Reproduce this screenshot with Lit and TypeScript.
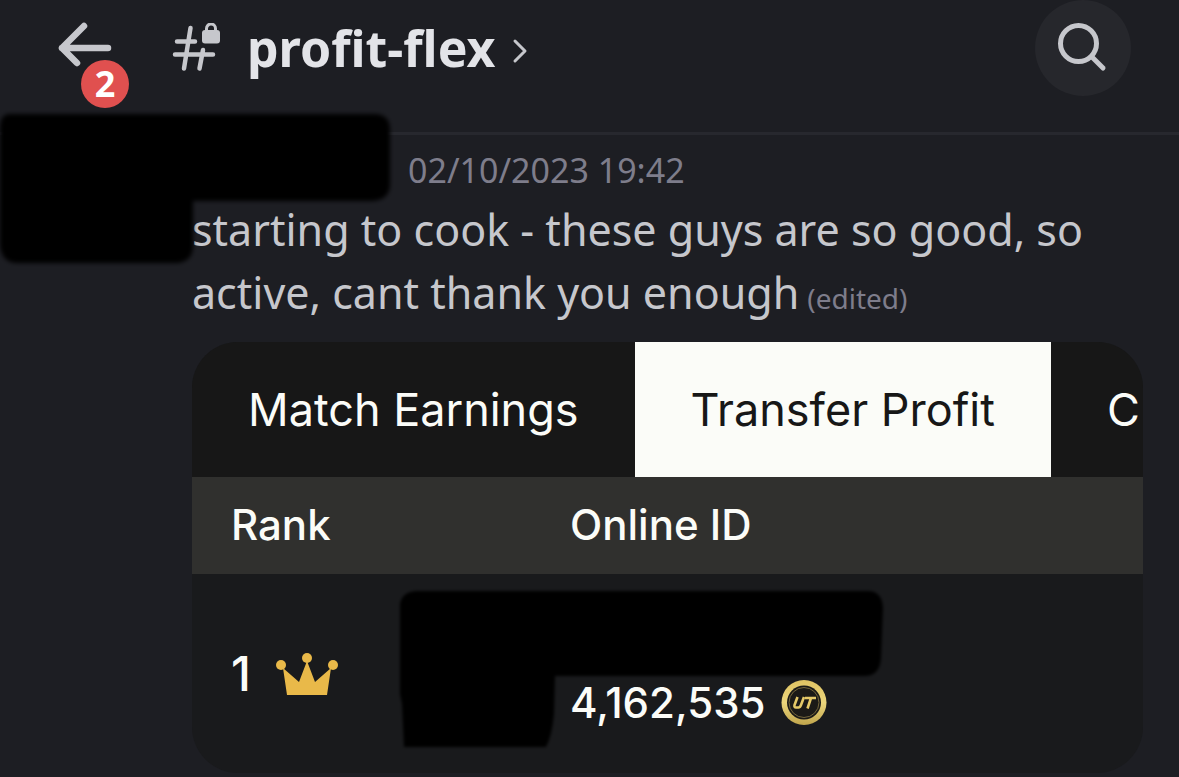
import { LitElement, html, css } from "lit";
import { customElement, state } from "lit/decorators.js";

@customElement("channel-header")
class ChannelHeader extends LitElement {
  static styles = css`
    :host { display: block; }
    .bar {
      display: flex;
      align-items: center;
      padding: 0 48px 36px 56px;
      border-bottom: 3px solid #27282e;
    }
    button {
      display: block;
      border: 0;
      margin: 0;
      padding: 0;
      background: none;
      color: inherit;
      font: inherit;
      cursor: pointer;
    }
    svg { display: block; }
    .back { position: relative; color: #c6c7cc; }
    .badge {
      position: absolute;
      left: 25px;
      top: 38px;
      width: 48px;
      height: 48px;
      border-radius: 50%;
      background: #e0504f;
      color: #fff;
      font: 700 36px/48px "Noto Sans", sans-serif;
      text-align: center;
    }
    .title {
      display: flex;
      align-items: center;
      margin: 0 auto 0 60px;
      color: #c6c7cc;
    }
    h1 {
      margin: 0 16px 0 26px;
      color: #e3e4e8;
      font: 700 50px/64px "Noto Sans", sans-serif;
    }
    .search {
      display: grid;
      place-items: center;
      width: 96px;
      height: 96px;
      border-radius: 50%;
      background: #26272c;
      color: #c6c7cc;
    }
  `;

  render() {
    return html`
      <header class="bar">
        <button class="back" aria-label="Back, 2 unread">
          <svg width="56" height="52" viewBox="0 0 56 52" fill="none" stroke="currentColor" stroke-width="6.500" stroke-linecap="round" stroke-linejoin="round">
            <path d="M28 4 6 26 21 41M6 26H52" />
          </svg>
          <span class="badge">2</span>
        </button>
        <div class="title">
          <svg width="49" height="50" viewBox="0 0 49 50" fill="none" stroke="currentColor" stroke-width="4.500" stroke-linecap="round">
            <path d="M18.500 5 12 45.500M31 27 27.500 45.500M5 18.500H23M3 31.500H41" />
            <rect x="30" y="7" width="18" height="13.500" rx="3" fill="currentColor" stroke="none" />
            <path d="M34.500 9V6.500a4.500 4.500 0 0 1 9 0V9" stroke-width="3" transform="translate(0 -1)" />
          </svg>
          <h1>profit-flex</h1>
          <svg width="16" height="32" viewBox="0 0 16 32" fill="none" stroke="currentColor" stroke-width="3" stroke-linecap="round" stroke-linejoin="round">
            <path d="M3 9 13 19 3 29" />
          </svg>
        </div>
        <button class="search" aria-label="Search">
          <svg width="52" height="52" viewBox="0 0 52 52" fill="none" stroke="currentColor" stroke-width="5" stroke-linecap="round">
            <circle cx="21.500" cy="21.500" r="18" />
            <path d="M35 35 46 46" />
          </svg>
        </button>
      </header>
    `;
  }
}

@customElement("leaderboard-card")
class LeaderboardCard extends LitElement {
  @state() private active = 1;
  private tabs = ["Match Earnings", "Transfer Profit", "C"];

  static styles = css`
    :host {
      display: block;
      overflow: hidden;
      border-radius: 46px;
      background: #191a1c;
      color: #fbfcf8;
      font-family: Inter, sans-serif;
    }
    .tabs { display: flex; background: #171717; overflow: hidden; }
    .tab {
      flex: none;
      height: 135px;
      margin: 0;
      padding: 0 56px;
      border: 0;
      background: none;
      color: inherit;
      font: 400 45px/56px Inter, sans-serif;
      white-space: nowrap;
      cursor: pointer;
    }
    .tab.active { background: #fbfcf8; color: #171717; }
    table { width: 100%; border-collapse: collapse; table-layout: fixed; }
    th, td { padding: 0; text-align: left; }
    th { height: 95px; padding-bottom: 2px; background: #30302e; font-size: 42px; line-height: 56px; font-weight: 500; }
    th:first-child, td:first-child { width: 339px; padding-left: 39px; }
    td { height: 199px; }
    .rank { display: flex; align-items: center; gap: 24px; font: 500 48px/56px Inter, sans-serif; }
    .player { position: relative; height: 199px; }
    .coins {
      display: flex;
      align-items: center;
      gap: 16px;
      padding-top: 100px;
      font: 500 42px/58px Inter, sans-serif;
    }
    svg { display: block; }
    .scribble { position: absolute; left: -176px; top: 12px; }
  `;

  render() {
    return html`
      <div class="tabs" role="tablist">
        ${this.tabs.map(
          (label, i) => html`<button
            class="tab ${i === this.active ? "active" : ""}"
            role="tab"
            aria-selected=${i === this.active ? "true" : "false"}
            @click=${() => (this.active = i)}
          >${label}</button>`
        )}
      </div>
      <table>
        <thead>
          <tr><th scope="col">Rank</th><th scope="col">Online ID</th></tr>
        </thead>
        <tbody>
          <tr>
            <td>
              <div class="rank">
                <span>1</span>
                <svg width="64" height="44" viewBox="0 0 64 44" fill="#e9b949" role="img" aria-label="Crown">
                  <path d="M8 16 24 30 32 9 40 30 56 16 52 43H12Z" />
                  <circle cx="6" cy="13" r="5" /><circle cx="32" cy="6" r="5" /><circle cx="58" cy="13" r="5" />
                </svg>
              </div>
            </td>
            <td>
              <div class="player">
                <svg class="scribble" width="500" height="168" viewBox="0 0 500 168" aria-hidden="true">
                  <defs><filter id="soft" x="-5%" y="-5%" width="110%" height="110%"><feGaussianBlur stdDeviation="1.500" /></filter></defs>
                  <path filter="url(#soft)" d="M22 5H474Q488 5 489 22L487 72Q486 90 470 90H161L160 128Q158 150 152 161H10L8 118 6 108V18Q8 6 22 5Z" />
                </svg>
                <div class="coins">
                  <span>4,162,535</span>
                  <svg width="46" height="46" viewBox="0 0 46 46" role="img" aria-label="UT coins">
                    <defs>
                      <linearGradient id="gold" x1="0" y1="0" x2="0" y2="1">
                        <stop offset="0" stop-color="#e0c463" /><stop offset="0.500" stop-color="#ecd67c" /><stop offset="1" stop-color="#c0a54c" />
                      </linearGradient>
                    </defs>
                    <circle cx="23" cy="22.500" r="22.500" fill="url(#gold)" />
                    <circle cx="23" cy="22.500" r="17" fill="#1b1a17" />
                    <circle cx="23" cy="22.500" r="15" fill="none" stroke="#75673c" stroke-width="1" />
                    <path d="M16.500 17 13.500 25Q13 27.500 15 27.500H17.500Q19 27.500 20 25L23 17M24 18H35M30 18 26.500 28.500" fill="none" stroke="#e5c968" stroke-width="2.600" />
                  </svg>
                </div>
              </div>
            </td>
          </tr>
        </tbody>
      </table>
    `;
  }
}

@customElement("app-root")
class AppRoot extends LitElement {
  static styles = css`
    :host {
      display: block;
      min-height: 100vh;
      background: #1d1e23;
      color: #c6c7cc;
      font-family: "Noto Sans", sans-serif;
      overflow: hidden;
    }
    .message { position: relative; padding: 7px 36px 4px 192px; }
    time {
      display: block;
      padding-left: 216px;
      color: #7e7d8b;
      font-size: 34px;
      line-height: 56px;
    }
    p { margin: 0 0 18px; font-size: 43px; line-height: 63px; font-weight: 400; }
    .edited { display: inline-block; margin-left: 8px; color: #7e7d8b; font-size: 28px; line-height: 28px; }
    .scribble { position: absolute; left: -8px; top: -29px; display: block; }
  `;

  render() {
    return html`
      <channel-header></channel-header>
      <main>
        <article class="message">
          <svg class="scribble" width="410" height="164" viewBox="0 0 410 164" aria-hidden="true">
            <defs><filter id="soft" x="-5%" y="-5%" width="110%" height="110%"><feGaussianBlur stdDeviation="2" /></filter></defs>
            <path filter="url(#soft)" d="M16 8H384Q398 9 398 24V78Q398 94 380 95H201V142Q200 155 186 157H24Q10 156 8 140V20Q9 9 16 8Z" />
          </svg>
          <time datetime="2023-10-02T19:42">02/10/2023 19:42</time>
          <p>starting to cook - these guys are so good, so active, cant thank you enough<span class="edited">(edited)</span></p>
          <leaderboard-card></leaderboard-card>
        </article>
      </main>
    `;
  }
}
